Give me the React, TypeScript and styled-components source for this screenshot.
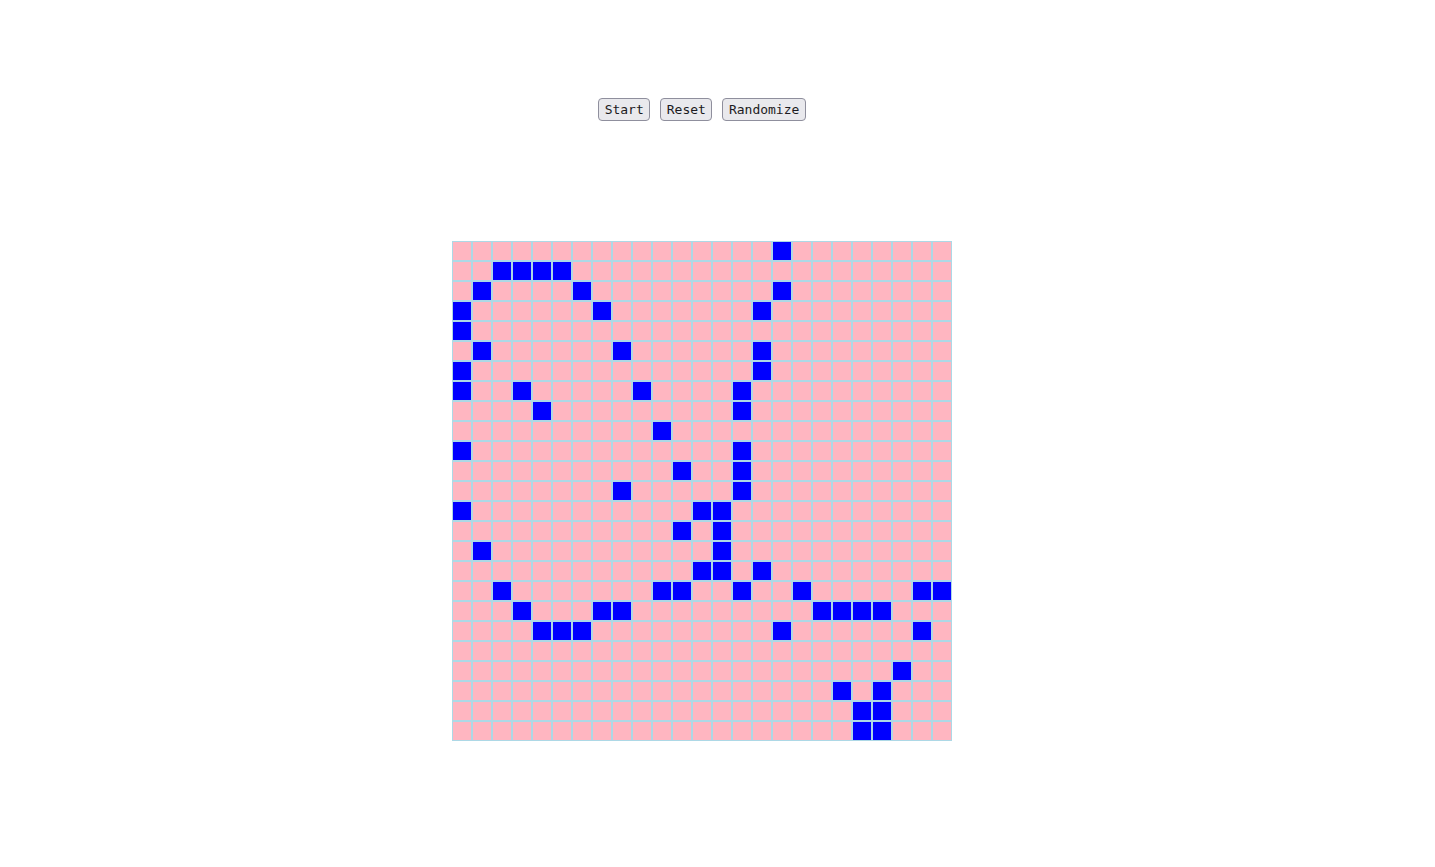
import React from "react";
import styled, { createGlobalStyle } from "styled-components";

const GlobalStyle = createGlobalStyle`
  html, body {
    margin: 0;
    padding: 0;
    background: #ffffff;
    font-family: "DejaVu Sans Mono", monospace;
  }
`;

const Page = styled.div`
  width: 1404px;
  display: flex;
  flex-direction: column;
  align-items: center;
  padding-top: 98px;
`;

const Toolbar = styled.div`
  display: flex;
  gap: 10px;
`;

const Button = styled.button`
  height: 23px;
  padding: 0 5.5px;
  font-family: "DejaVu Sans Mono", monospace;
  font-size: 13px;
  color: #1c1b22;
  background: #e9e9ed;
  border: 1px solid #8f8f9d;
  border-radius: 4px;
  cursor: pointer;
`;

const Board = styled.div`
  margin-top: 120px;
  display: grid;
  grid-template-columns: repeat(25, 20px);
  grid-auto-rows: 20px;
`;

const Cell = styled.div<{ $alive: boolean }>`
  width: 18px;
  height: 18px;
  border: 1px solid #add8e6;
  background: ${(p) => (p.$alive ? "#0000ff" : "#ffb6c1")};
`;

const ALIVE: number[][] = [
  [16],
  [2, 3, 4, 5],
  [1, 6, 16],
  [0, 7, 15],
  [0],
  [1, 8, 15],
  [0, 15],
  [0, 3, 9, 14],
  [4, 14],
  [10],
  [0, 14],
  [11, 14],
  [8, 14],
  [0, 12, 13],
  [11, 13],
  [1, 13],
  [12, 13, 15],
  [2, 10, 11, 14, 17, 23, 24],
  [3, 7, 8, 18, 19, 20, 21],
  [4, 5, 6, 16, 23],
  [],
  [22],
  [19, 21],
  [20, 21],
  [20, 21],
];

export default function App() {
  const rows = ALIVE.map((r) => new Set(r));
  return (
    <>
      <GlobalStyle />
      <Page>
        <Toolbar>
          <Button>Start</Button>
          <Button>Reset</Button>
          <Button>Randomize</Button>
        </Toolbar>
        <Board>
          {rows.map((set, r) =>
            Array.from({ length: 25 }, (_, c) => (
              <Cell key={`${r}-${c}`} $alive={set.has(c)} />
            ))
          )}
        </Board>
      </Page>
    </>
  );
}
